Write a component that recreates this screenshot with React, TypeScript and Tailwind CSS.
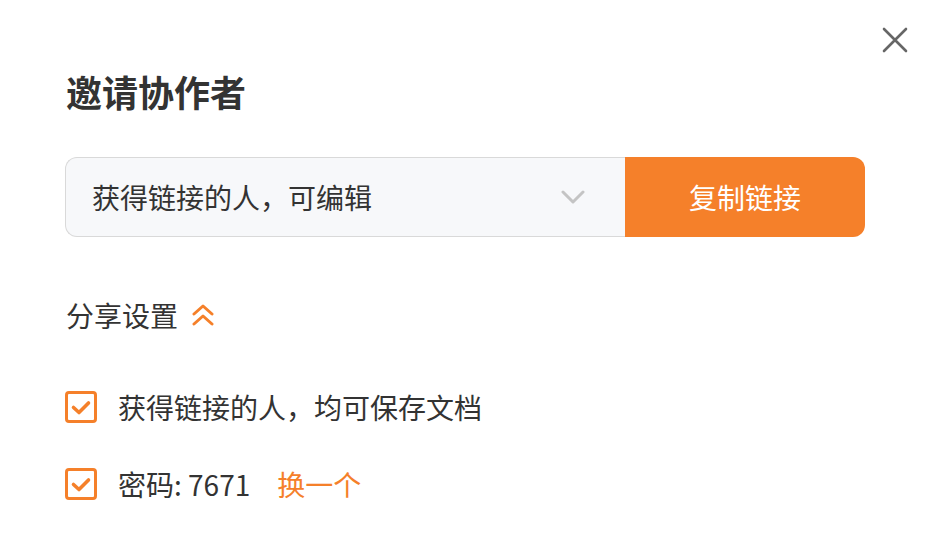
import React from "react";

const font = { fontFamily: '"Noto Sans CJK SC", "Noto Sans", sans-serif' };

function Check() {
  return (
    <div className="w-[32px] h-[32px] border-[3px] border-[#F5802A] rounded-[4px] flex-none">
      <svg width="26" height="26" viewBox="3 3 26 26" fill="none">
        <path d="M8.5 16.5 L14 21.5 L23.5 12" stroke="#F5802A" strokeWidth="3.6" strokeLinecap="round" strokeLinejoin="round" />
      </svg>
    </div>
  );
}

export default function App() {
  return (
    <div className="relative w-[932px] h-[552px] bg-white text-[#333]" style={font}>
      <button className="absolute left-[882px] top-[27px] w-[26px] h-[26px]">
        <svg width="26" height="26" viewBox="0 0 26 26" fill="none">
          <path d="M2 2 L24 24 M24 2 L2 24" stroke="#666" strokeWidth="2.6" strokeLinecap="round" />
        </svg>
      </button>
      <div className="flex flex-col pl-[66px] pt-[73px]">
        <h1 className="text-[36px] leading-[36px] font-bold text-[#333]">邀请协作者</h1>
        <div className="flex mt-[48px] w-[800px] h-[80px] -ml-[1px]">
          <div className="flex-1 flex items-center justify-between bg-[#f7f8fa] border border-[#d9d9d9] border-r-0 rounded-l-[12px] pl-[26px] pr-[40px]">
            <span className="text-[28px] leading-[28px]">获得链接的人，可编辑</span>
            <svg width="24" height="14" viewBox="0 0 24 14" fill="none">
              <path d="M2 2 L12 12 L22 2" stroke="#c4c4c4" strokeWidth="3" strokeLinecap="round" strokeLinejoin="round" />
            </svg>
          </div>
          <button className="w-[240px] h-full bg-[#F5802A] rounded-r-[12px] text-white text-[28px] leading-[28px] flex items-center justify-center">
            复制链接
          </button>
        </div>
        <div className="flex items-center mt-[64px] h-[28px]">
          <span className="text-[28px] leading-[28px]">分享设置</span>
          <svg className="ml-[14px]" width="22" height="22" viewBox="0 0 22 22" fill="none">
            <path d="M2 10 L11 2 L20 10 M2 20 L11 12 L20 20" stroke="#F5802A" strokeWidth="3" strokeLinecap="round" strokeLinejoin="round" />
          </svg>
        </div>
        <div className="flex items-center mt-[62px] h-[32px] -ml-[1px]">
          <Check />
          <span className="ml-[21px] text-[28px] leading-[28px]">获得链接的人，均可保存文档</span>
        </div>
        <div className="flex items-center mt-[45px] h-[32px] -ml-[1px]">
          <Check />
          <span className="ml-[21px] text-[28px] leading-[28px]">密码: 7671</span>
          <span className="ml-[27px] text-[28px] leading-[28px] text-[#F5802A] cursor-pointer">换一个</span>
        </div>
      </div>
    </div>
  );
}
